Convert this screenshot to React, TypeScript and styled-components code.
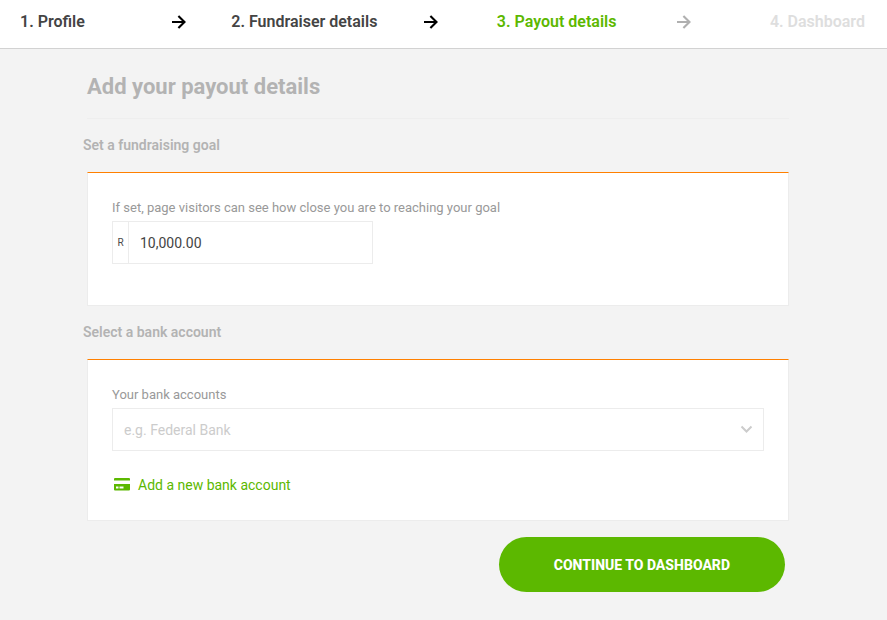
import React, { useState } from "react";
import styled, { createGlobalStyle } from "styled-components";

const green = "#5cb800";
const line = "#ececec";

const GlobalStyle = createGlobalStyle`
  *, *::before, *::after { box-sizing: border-box; }
  body {
    margin: 0;
    background: #f3f3f3;
    color: #4a4a4a;
    font-family: Roboto, "Liberation Sans", sans-serif;
    font-size: 14px;
    line-height: 20px;
  }
  button, input, select { font-family: inherit; }
`;

type StepState = "done" | "current" | "upcoming";
const stepColors: Record<StepState, string> = {
  done: "#444444",
  current: green,
  upcoming: "#dedede",
};

const Header = styled.header`
  background: #ffffff;
  border-bottom: 1px solid #d2d2d2;
`;

const Steps = styled.ol`
  display: grid;
  grid-template-columns: minmax(0, 95fr) repeat(5, minmax(0, 126fr)) minmax(0, 119fr);
  align-items: center;
  margin: 0;
  padding: 10px 22px 14px 20px;
  list-style: none;
`;

const Step = styled.li<{ $state: StepState; $align?: string }>`
  display: flex;
  justify-content: ${({ $align }) => $align ?? "center"};
  color: ${({ $state }) => stepColors[$state]};
  font-size: 16px;
  font-weight: 600;
  line-height: 24px;
  white-space: nowrap;
`;

const StepArrow = styled.li<{ $muted?: boolean }>`
  display: flex;
  justify-content: center;
  color: ${({ $muted }) => ($muted ? "#b0b0b0" : "#000000")};
`;

const Main = styled.main`
  padding: 24px 98px 28px 83px;
`;

const Title = styled.h1`
  margin: 0 0 0 4px;
  padding-bottom: 17px;
  border-bottom: 1px solid #eeeeee;
  color: #b3b3b3;
  font-size: 22px;
  font-weight: 700;
  line-height: 28px;
`;

const SectionTitle = styled.h2`
  margin: 16px 0 17px;
  color: #b3b3b3;
  font-size: 14px;
  font-weight: 600;
  line-height: 20px;
`;

const Card = styled.div`
  margin-left: 4px;
  padding: 24px 24px 25px;
  background: #ffffff;
  border: 1px solid ${line};
  border-top-color: #ff8000;
`;

const Label = styled.label`
  display: block;
  margin-bottom: 2px;
  color: #999999;
  font-size: 13px;
  line-height: 22px;
`;

const AmountField = styled.div`
  display: flex;
  max-width: 261px;
  margin-bottom: 16px;
  border: 1px solid ${line};
`;

const Currency = styled.span`
  display: flex;
  align-items: center;
  justify-content: center;
  width: 16px;
  border-right: 1px solid ${line};
  font-size: 10px;
`;

const AmountInput = styled.input`
  flex: 1;
  min-width: 0;
  height: 41px;
  padding: 0 11px;
  border: 0;
  background: transparent;
  color: #444444;
  font-size: 14px;
`;

const SelectField = styled.div`
  position: relative;
  color: #cccccc;
`;

const AccountSelect = styled.select`
  appearance: none;
  display: block;
  width: 100%;
  height: 43px;
  padding: 0 40px 0 11px;
  border: 1px solid ${line};
  border-radius: 0;
  background: #ffffff;
  color: inherit;
  font-size: 14px;
`;

const Chevron = styled.svg`
  position: absolute;
  top: 14px;
  right: 10px;
  pointer-events: none;
`;

const AddLink = styled.a`
  display: inline-flex;
  align-items: center;
  gap: 8px;
  margin-top: 24px;
  color: ${green};
  text-decoration: none;
  vertical-align: top;
`;

const Actions = styled.div`
  display: flex;
  justify-content: flex-end;
  padding: 16px 4px 0 0;
`;

const ContinueButton = styled.button`
  min-height: 55px;
  padding: 0 55px;
  border: 0;
  border-radius: 28px;
  background: ${green};
  color: #ffffff;
  font-size: 14px;
  font-weight: 800;
  text-transform: uppercase;
  cursor: pointer;
`;

function Arrow({ muted }: { muted?: boolean }) {
  return (
    <StepArrow $muted={muted} aria-hidden="true">
      <svg width="16" height="16" viewBox="0 0 16 16" fill="none" stroke="currentColor" strokeWidth="2.1">
        <path d="M2 8H14M8.4 1.9L14.5 8L8.4 14.1" />
      </svg>
    </StepArrow>
  );
}

function CardIcon() {
  return (
    <svg width="18" height="16" viewBox="0 0 18 16" fill="currentColor" aria-hidden="true">
      <path d="M3 1H17Q18 1 18 2V3.5H2V2Q2 1 3 1Z" />
      <path fillRule="evenodd" d="M2 7H18V12.5Q18 13.5 17 13.5H3Q2 13.5 2 12.5ZM4 9.5V11.5H6.5V9.5ZM7.5 9.5V11.5H11.5V9.5Z" />
    </svg>
  );
}

export default function App() {
  const [amount, setAmount] = useState("10,000.00");
  return (
    <>
      <GlobalStyle />
      <Header>
        <Steps>
          <Step $state="done" $align="flex-start">1. Profile</Step>
          <Arrow />
          <Step $state="done">2. Fundraiser details</Step>
          <Arrow />
          <Step $state="current" aria-current="step">3. Payout details</Step>
          <Arrow muted />
          <Step $state="upcoming" $align="flex-end">4. Dashboard</Step>
        </Steps>
      </Header>
      <Main>
        <Title>Add your payout details</Title>
        <form onSubmit={(e) => e.preventDefault()}>
          <SectionTitle>Set a fundraising goal</SectionTitle>
          <Card>
            <Label htmlFor="goal">If set, page visitors can see how close you are to reaching your goal</Label>
            <AmountField>
              <Currency>R</Currency>
              <AmountInput id="goal" inputMode="decimal" value={amount} onChange={(e) => setAmount(e.target.value)} />
            </AmountField>
          </Card>
          <SectionTitle>Select a bank account</SectionTitle>
          <Card>
            <Label htmlFor="account">Your bank accounts</Label>
            <SelectField>
              <AccountSelect id="account" defaultValue="">
                <option value="">e.g. Federal Bank</option>
              </AccountSelect>
              <Chevron width="14" height="14" viewBox="0 0 14 14" fill="none" stroke="currentColor" strokeWidth="2" aria-hidden="true">
                <path d="M1.5 4.5L6.5 9.5L11.5 4.5" />
              </Chevron>
            </SelectField>
            <AddLink href="#add-account">
              <CardIcon />
              Add a new bank account
            </AddLink>
          </Card>
          <Actions>
            <ContinueButton type="submit">Continue to dashboard</ContinueButton>
          </Actions>
        </form>
      </Main>
    </>
  );
}
